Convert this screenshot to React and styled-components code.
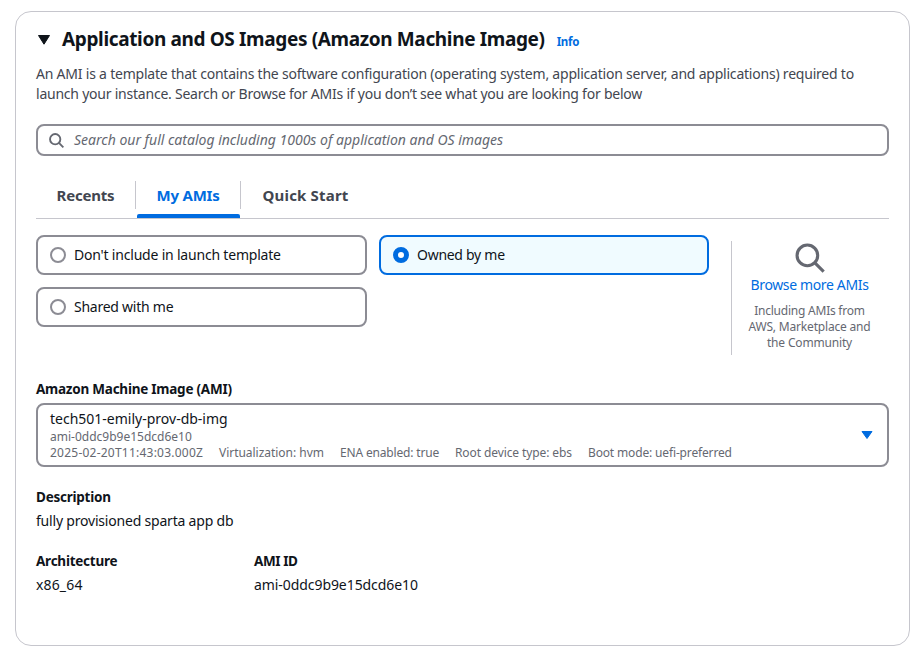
import React from 'react';
import styled, { createGlobalStyle } from 'styled-components';

const color = {
  text: '#0f141a',
  body: '#424650',
  muted: '#656871',
  field: '#8c8c94',
  line: '#c6c6cd',
  blue: '#006ce0',
  tint: '#f0fbff',
};

const GlobalStyle = createGlobalStyle`
  * { box-sizing: border-box; }
  body {
    margin: 0;
    background: #fff;
    color: ${color.text};
    font: 14px/20px "Noto Sans", "Open Sans", sans-serif;
  }
`;

const Page = styled.main`
  width: 916px;
  height: 661px;
  padding: 11px 6px 15px 15px;
`;

const Panel = styled.section`
  height: 635px;
  padding: 15px 20px;
  border: 1px solid ${color.line};
  border-radius: 16px;
`;

const Text = styled.span`
  display: block;
  white-space: nowrap;
  letter-spacing: ${(p) => p.$track || 0}px;
`;

const Header = styled.header`
  display: flex;
  height: 24px;
`;

const Caret = styled.svg`
  flex: none;
  display: block;
  width: 14px;
  height: 12px;
  margin: 7px 11px 0 1px;
`;

const Title = styled.h2`
  margin: 0 12px 0 0;
  font-size: 19px;
  font-weight: 700;
  line-height: 24px;
  letter-spacing: -0.36px;
  white-space: nowrap;
`;

const InfoLink = styled.a`
  margin-top: 5px;
  color: ${color.blue};
  font-size: 11.5px;
  font-weight: 700;
  line-height: 20px;
  letter-spacing: -0.25px;
`;

const Intro = styled.div`
  margin-top: 13px;
  color: ${color.body};
`;

const SearchBox = styled.div`
  display: flex;
  align-items: center;
  height: 32px;
  margin-top: 20px;
  padding: 0 11px;
  border: 2px solid ${color.field};
  border-radius: 8px;
  color: ${color.muted};
  font-style: italic;
`;

const SearchIcon = styled.svg`
  flex: none;
  display: block;
  width: ${(p) => p.$size}px;
  height: ${(p) => p.$size}px;
  fill: none;
  stroke: ${color.muted};
`;

const SearchText = styled(Text)`
  margin-left: 10px;
`;

const Tabs = styled.nav`
  display: flex;
  height: 43px;
  margin-top: 20px;
  border-bottom: 1px solid ${color.line};
`;

const Tab = styled.div`
  display: flex;
  flex-direction: column;
  align-items: center;
  justify-content: space-between;
  width: ${(p) => p.$width}px;
  color: ${(p) => (p.$active ? color.blue : color.body)};
  font-size: 15px;
  font-weight: 700;
  line-height: 39px;
`;

const TabDivider = styled.i`
  width: 1px;
  height: 28px;
  margin-top: 5px;
  background: ${color.line};
`;

const TabBar = styled.i`
  width: 103px;
  height: 4px;
  margin: -2px 0 0 1px;
  border-radius: 2px 2px 0 0;
  background: ${color.blue};
`;

const Choices = styled.div`
  display: flex;
  height: 120px;
  margin-top: 16px;
`;

const Tiles = styled.div`
  display: grid;
  grid-template-columns: 331px 330px;
  grid-auto-rows: 40px;
  gap: 12px;
  width: 673px;
`;

const Tile = styled.label`
  display: flex;
  align-items: center;
  gap: 8px;
  padding: 0 12px;
  border: 2px solid ${(p) => (p.$selected ? color.blue : color.field)};
  border-radius: 8px;
  background: ${(p) => (p.$selected ? color.tint : '#fff')};
`;

const RadioDot = styled.i`
  width: 16px;
  height: 16px;
  border: ${(p) => (p.$selected ? `5px solid ${color.blue}` : `2px solid ${color.field}`)};
  border-radius: 50%;
  background: #fff;
`;

const Browse = styled.aside`
  display: flex;
  flex-direction: column;
  align-items: center;
  width: 156px;
  height: 114px;
  margin: 6px 0 0 22px;
  padding-top: 2px;
  border-left: 1px solid ${color.line};
`;

const BrowseLink = styled(Text)`
  margin-top: 2px;
  color: ${color.blue};
`;

const BrowseNote = styled.div`
  margin-top: 8px;
  color: ${color.muted};
  font-size: 12px;
  line-height: 16px;
  text-align: center;
`;

const Label = styled(Text)`
  font-size: 13.5px;
  font-weight: 700;
`;

const ImageField = styled.div`
  margin-top: 24px;
`;

const Select = styled.div`
  display: flex;
  align-items: center;
  justify-content: space-between;
  height: 64px;
  margin-top: 4px;
  padding: 0 14px 0 12px;
  border: 2px solid ${color.field};
  border-radius: 8px;
`;

const Small = styled(Text)`
  color: ${color.muted};
  font-size: 12px;
  line-height: 16px;
`;

const Tags = styled.div`
  display: grid;
  grid-template-columns: 169px 121px 115px 133px auto;
`;

const SelectCaret = styled.svg`
  flex: none;
  display: block;
  width: 12px;
  height: 10px;
`;

const Details = styled.div`
  display: grid;
  grid-template-columns: 218px auto;
  margin-top: 20px;
`;

const Value = styled(Text)`
  margin-top: 4px;
`;

function Magnifier({ size, weight }) {
  return (
    <SearchIcon $size={size} viewBox="0 0 16 16" strokeWidth={weight}>
      <circle cx="6.6" cy="6.6" r="5.5" />
      <path d="M10.6 10.6l4.7 4.7" />
    </SearchIcon>
  );
}

function Option({ selected, track, children }) {
  return (
    <Tile $selected={selected}>
      <RadioDot $selected={selected} />
      <Text $track={track}>{children}</Text>
    </Tile>
  );
}

function Detail({ label, labelTrack, value, valueTrack }) {
  return (
    <div>
      <Label $track={labelTrack}>{label}</Label>
      <Value $track={valueTrack}>{value}</Value>
    </div>
  );
}

export default function App() {
  return (
    <Page>
      <GlobalStyle />
      <Panel>
        <Header>
          <Caret viewBox="0 0 14 12">
            <path d="M1.5 1.5h11L7 10.2z" fill={color.text} stroke={color.text} strokeLinejoin="round" />
          </Caret>
          <Title>Application and OS Images (Amazon Machine Image)</Title>
          <InfoLink>Info</InfoLink>
        </Header>
        <Intro>
          <Text $track={-0.213}>
            An AMI is a template that contains the software configuration (operating system, application server, and applications) required to
          </Text>
          <Text $track={-0.228}>
            launch your instance. Search or Browse for AMIs if you don’t see what you are looking for below
          </Text>
        </Intro>
        <SearchBox>
          <Magnifier size={15} weight={2} />
          <SearchText>Search our full catalog including 1000s of application and OS images</SearchText>
        </SearchBox>
        <Tabs>
          <Tab $width={99}>
            <Text $track={-0.2}>Recents</Text>
          </Tab>
          <TabDivider />
          <Tab $width={104} $active>
            <Text $track={-0.22}>My AMIs</Text>
            <TabBar />
          </Tab>
          <TabDivider />
          <Tab $width={129}>
            <Text $track={0.18}>Quick Start</Text>
          </Tab>
        </Tabs>
        <Choices>
          <Tiles>
            <Option track={-0.2}>Don't include in launch template</Option>
            <Option track={-0.28} selected>Owned by me</Option>
            <Option track={-0.25}>Shared with me</Option>
          </Tiles>
          <Browse>
            <Magnifier size={30} weight={1.65} />
            <BrowseLink $track={-0.36}>Browse more AMIs</BrowseLink>
            <BrowseNote>
              <Text $track={-0.23}>Including AMIs from</Text>
              <Text $track={-0.18}>AWS, Marketplace and</Text>
              <Text $track={-0.17}>the Community</Text>
            </BrowseNote>
          </Browse>
        </Choices>
        <ImageField>
          <Label $track={-0.24}>Amazon Machine Image (AMI)</Label>
          <Select>
            <div>
              <Text>tech501-emily-prov-db-img</Text>
              <Small>ami-0ddc9b9e15dcd6e10</Small>
              <Tags>
                <Small $track={0.23}>2025-02-20T11:43:03.000Z</Small>
                <Small $track={-0.03}>Virtualization: hvm</Small>
                <Small $track={-0.17}>ENA enabled: true</Small>
                <Small $track={-0.1}>Root device type: ebs</Small>
                <Small $track={-0.15}>Boot mode: uefi-preferred</Small>
              </Tags>
            </div>
            <SelectCaret viewBox="0 0 12 10">
              <path d="M1 1.5h10L6 8.5z" fill={color.blue} stroke={color.blue} strokeLinejoin="round" />
            </SelectCaret>
          </Select>
        </ImageField>
        <Details>
          <Detail label="Description" labelTrack={-0.24} value="fully provisioned sparta app db" valueTrack={-0.2} />
        </Details>
        <Details>
          <Detail label="Architecture" labelTrack={-0.24} value="x86_64" valueTrack={0.15} />
          <Detail label="AMI ID" labelTrack={-0.4} value="ami-0ddc9b9e15dcd6e10" valueTrack={-0.07} />
        </Details>
      </Panel>
    </Page>
  );
}
